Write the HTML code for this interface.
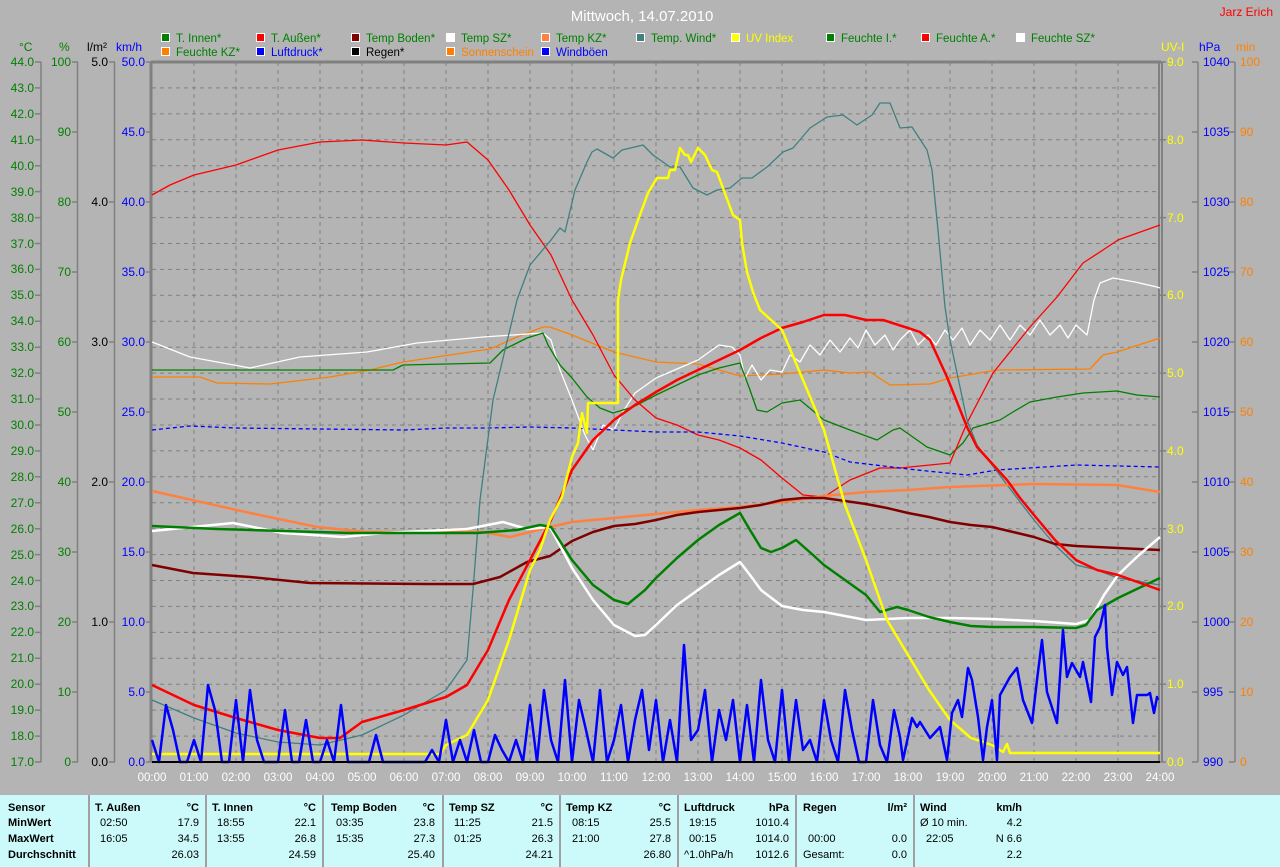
<!DOCTYPE html>
<html><head><meta charset="utf-8"><style>
body{margin:0;width:1280px;height:867px;background:#b4b4b4;overflow:hidden;font-family:"Liberation Sans",sans-serif;}
svg{position:absolute;left:0;top:0}
#tbl{position:absolute;left:0;top:795px;width:1280px;height:72px;background:#ccfafa;font-size:11px;color:#000}
#tbl div{position:absolute;white-space:nowrap}
.sep{width:2px;height:72px;top:0;background:#a0a0a0}
.b{font-weight:bold}
.r{text-align:right}
</style></head><body>
<svg width="1280" height="795" xmlns="http://www.w3.org/2000/svg" font-family="Liberation Sans, sans-serif" font-size="12">
<rect x="0" y="0" width="1280" height="795" fill="#b4b4b4"/>
<!-- grid -->
<g stroke="#808080" stroke-width="1" stroke-dasharray="4,4" fill="none">
<path d="M152 87.9H1160M152 113.9H1160M152 139.8H1160M152 165.7H1160M152 191.6H1160M152 217.6H1160M152 243.5H1160M152 269.4H1160M152 295.3H1160M152 321.3H1160M152 347.2H1160M152 373.1H1160M152 399H1160M152 425H1160M152 450.9H1160M152 476.8H1160M152 502.7H1160M152 528.7H1160M152 554.6H1160M152 580.5H1160M152 606.4H1160M152 632.4H1160M152 658.3H1160M152 684.2H1160M152 710.1H1160M152 736.1H1160"/>
<path d="M194 62V762M236 62V762M278 62V762M320 62V762M362 62V762M404 62V762M446 62V762M488 62V762M530 62V762M572 62V762M614 62V762M656 62V762M698 62V762M740 62V762M782 62V762M824 62V762M866 62V762M908 62V762M950 62V762M992 62V762M1034 62V762M1076 62V762M1118 62V762"/>
</g>
<!-- borders -->
<path d="M151 62H1161" stroke="#808080" stroke-width="3"/>
<path d="M151 62V762" stroke="#808080" stroke-width="3"/>
<path d="M1159 62V762M1162 62V762" stroke="#808080" stroke-width="2"/>
<!-- axes -->
<g stroke="#808080" stroke-width="1.5" fill="none">
<path d="M41 62V762M77.5 62V762M114.5 62V762M1198 62V762M1235 62V762"/>
<path d="M35 62H41M35 87.9H41M35 113.9H41M35 139.8H41M35 165.7H41M35 191.6H41M35 217.6H41M35 243.5H41M35 269.4H41M35 295.3H41M35 321.3H41M35 347.2H41M35 373.1H41M35 399H41M35 425H41M35 450.9H41M35 476.8H41M35 502.7H41M35 528.7H41M35 554.6H41M35 580.5H41M35 606.4H41M35 632.4H41M35 658.3H41M35 684.2H41M35 710.1H41M35 736.1H41M35 762H41"/>
<path d="M72 62H78M72 132H78M72 202H78M72 272H78M72 342H78M72 412H78M72 482H78M72 552H78M72 622H78M72 692H78M72 762H78"/>
<path d="M109 62H115M109 202H115M109 342H115M109 482H115M109 622H115M109 762H115"/>
<path d="M146 62H152M146 132H152M146 202H152M146 272H152M146 342H152M146 412H152M146 482H152M146 552H152M146 622H152M146 692H152M146 762H152"/>
<path d="M1160 62H1166M1160 139.8H1166M1160 217.6H1166M1160 295.3H1166M1160 373.1H1166M1160 450.9H1166M1160 528.7H1166M1160 606.4H1166M1160 684.2H1166M1160 762H1166"/>
<path d="M1192 62H1198M1192 132H1198M1192 202H1198M1192 272H1198M1192 342H1198M1192 412H1198M1192 482H1198M1192 552H1198M1192 622H1198M1192 692H1198M1192 762H1198"/>
<path d="M1229 62H1235M1229 132H1235M1229 202H1235M1229 272H1235M1229 342H1235M1229 412H1235M1229 482H1235M1229 552H1235M1229 622H1235M1229 692H1235M1229 762H1235"/>
</g>
<!-- axis labels -->
<g fill="#008000" text-anchor="end">
<text x="34" y="66">44.0</text><text x="34" y="92">43.0</text><text x="34" y="118">42.0</text><text x="34" y="144">41.0</text><text x="34" y="170">40.0</text><text x="34" y="196">39.0</text><text x="34" y="222">38.0</text><text x="34" y="248">37.0</text><text x="34" y="273">36.0</text><text x="34" y="299">35.0</text><text x="34" y="325">34.0</text><text x="34" y="351">33.0</text><text x="34" y="377">32.0</text><text x="34" y="403">31.0</text><text x="34" y="429">30.0</text><text x="34" y="455">29.0</text><text x="34" y="481">28.0</text><text x="34" y="507">27.0</text><text x="34" y="533">26.0</text><text x="34" y="559">25.0</text><text x="34" y="585">24.0</text><text x="34" y="610">23.0</text><text x="34" y="636">22.0</text><text x="34" y="662">21.0</text><text x="34" y="688">20.0</text><text x="34" y="714">19.0</text><text x="34" y="740">18.0</text><text x="34" y="766">17.0</text>
<text x="71" y="66">100</text><text x="71" y="136">90</text><text x="71" y="206">80</text><text x="71" y="276">70</text><text x="71" y="346">60</text><text x="71" y="416">50</text><text x="71" y="486">40</text><text x="71" y="556">30</text><text x="71" y="626">20</text><text x="71" y="696">10</text><text x="71" y="766">0</text>
</g>
<g fill="#000" text-anchor="end">
<text x="108" y="66">5.0</text><text x="108" y="206">4.0</text><text x="108" y="346">3.0</text><text x="108" y="486">2.0</text><text x="108" y="626">1.0</text><text x="108" y="766">0.0</text>
</g>
<g fill="#0000ff" text-anchor="end">
<text x="145" y="66">50.0</text><text x="145" y="136">45.0</text><text x="145" y="206">40.0</text><text x="145" y="276">35.0</text><text x="145" y="346">30.0</text><text x="145" y="416">25.0</text><text x="145" y="486">20.0</text><text x="145" y="556">15.0</text><text x="145" y="626">10.0</text><text x="145" y="696">5.0</text><text x="145" y="766">0.0</text>
</g>
<g fill="#ffff00">
<text x="1167" y="66">9.0</text><text x="1167" y="144">8.0</text><text x="1167" y="222">7.0</text><text x="1167" y="299">6.0</text><text x="1167" y="377">5.0</text><text x="1167" y="455">4.0</text><text x="1167" y="533">3.0</text><text x="1167" y="610">2.0</text><text x="1167" y="688">1.0</text><text x="1167" y="766">0.0</text>
</g>
<g fill="#0000ff">
<text x="1203" y="66">1040</text><text x="1203" y="136">1035</text><text x="1203" y="206">1030</text><text x="1203" y="276">1025</text><text x="1203" y="346">1020</text><text x="1203" y="416">1015</text><text x="1203" y="486">1010</text><text x="1203" y="556">1005</text><text x="1203" y="626">1000</text><text x="1203" y="696">995</text><text x="1203" y="766">990</text>
</g>
<g fill="#ff8000">
<text x="1240" y="66">100</text><text x="1240" y="136">90</text><text x="1240" y="206">80</text><text x="1240" y="276">70</text><text x="1240" y="346">60</text><text x="1240" y="416">50</text><text x="1240" y="486">40</text><text x="1240" y="556">30</text><text x="1240" y="626">20</text><text x="1240" y="696">10</text><text x="1240" y="766">0</text>
</g>
<text x="19" y="51" fill="#008000">°C</text>
<text x="59" y="51" fill="#008000">%</text>
<text x="87" y="51" fill="#000">l/m²</text>
<text x="116" y="51" fill="#0000ff">km/h</text>
<text x="1161" y="51" fill="#ffff00">UV-I</text>
<text x="1199" y="51" fill="#0000ff">hPa</text>
<text x="1236" y="51" fill="#ff8000">min</text>
<!-- time labels -->
<g fill="#fff" text-anchor="middle" font-size="11.5">
<text x="152" y="781">00:00</text><text x="194" y="781">01:00</text><text x="236" y="781">02:00</text><text x="278" y="781">03:00</text><text x="320" y="781">04:00</text><text x="362" y="781">05:00</text><text x="404" y="781">06:00</text><text x="446" y="781">07:00</text><text x="488" y="781">08:00</text><text x="530" y="781">09:00</text><text x="572" y="781">10:00</text><text x="614" y="781">11:00</text><text x="656" y="781">12:00</text><text x="698" y="781">13:00</text><text x="740" y="781">14:00</text><text x="782" y="781">15:00</text><text x="824" y="781">16:00</text><text x="866" y="781">17:00</text><text x="908" y="781">18:00</text><text x="950" y="781">19:00</text><text x="992" y="781">20:00</text><text x="1034" y="781">21:00</text><text x="1076" y="781">22:00</text><text x="1118" y="781">23:00</text><text x="1160" y="781">24:00</text>
</g>
<!-- title -->
<text x="642" y="21" fill="#fff" font-size="15" text-anchor="middle">Mittwoch, 14.07.2010</text>
<text x="1273" y="16" fill="#ff0000" text-anchor="end">Jarz Erich</text>
<!-- legend -->
<g font-size="11.5" stroke="#fff" stroke-width="1">
<rect x="161.5" y="33.5" width="8" height="8" fill="#008000"/><rect x="256.5" y="33.5" width="8" height="8" fill="#ff0000"/><rect x="351.5" y="33.5" width="8" height="8" fill="#800000"/><rect x="446.5" y="33.5" width="8" height="8" fill="#fff"/><rect x="541.5" y="33.5" width="8" height="8" fill="#ff8040"/><rect x="636.5" y="33.5" width="8" height="8" fill="#408080"/><rect x="731.5" y="33.5" width="8" height="8" fill="#ffff00"/><rect x="826.5" y="33.5" width="8" height="8" fill="#008000"/><rect x="921.5" y="33.5" width="8" height="8" fill="#ff0000"/><rect x="1016.5" y="33.5" width="8" height="8" fill="#fff"/>
<rect x="161.5" y="47.5" width="8" height="8" fill="#ff8000"/><rect x="256.5" y="47.5" width="8" height="8" fill="#0000ff"/><rect x="351.5" y="47.5" width="8" height="8" fill="#000"/><rect x="446.5" y="47.5" width="8" height="8" fill="#ff8000"/><rect x="541.5" y="47.5" width="8" height="8" fill="#0000ff"/>
</g>
<g font-size="11.5" stroke="none">
<text x="176" y="42" fill="#008000">T. Innen*</text><text x="271" y="42" fill="#008000">T. Außen*</text><text x="366" y="42" fill="#008000">Temp Boden*</text><text x="461" y="42" fill="#008000">Temp SZ*</text><text x="556" y="42" fill="#008000">Temp KZ*</text><text x="651" y="42" fill="#008000">Temp. Wind*</text><text x="746" y="42" fill="#ffff00">UV Index</text><text x="841" y="42" fill="#008000">Feuchte I.*</text><text x="936" y="42" fill="#008000">Feuchte A.*</text><text x="1031" y="42" fill="#008000">Feuchte SZ*</text>
<text x="176" y="56" fill="#008000">Feuchte KZ*</text><text x="271" y="56" fill="#0000ff">Luftdruck*</text><text x="366" y="56" fill="#000">Regen*</text><text x="461" y="56" fill="#ff8000">Sonnenschein</text><text x="556" y="56" fill="#0000ff">Windböen</text>
</g>
<!-- data -->
<g fill="none" stroke-linejoin="round">
<!-- Feuchte KZ -->
<polyline stroke="#ff8000" stroke-width="1.3" points="152,377 200,377 217,383 270,384 330,377 370,370 403,362 490,349 517,337 543,327 550,327 572,335 614,352 656,362 698,364 740,376 782,374 824,370 850,373 870,372 890,385 930,384 950,378 997,370 1090,369 1103,355 1117,352 1160,338"/>
<!-- Feuchte SZ -->
<polyline stroke="#fff" stroke-width="1.3" points="152,342 190,357 250,368 300,357 367,352 417,343 483,337 543,333 551,340 560,370 572,400 585,435 593,450 603,425 614,430 624,410 635,393 656,378 698,360 719,345 732,347 740,355 745,378 752,365 761,380 770,370 782,372 790,355 800,362 810,345 820,355 830,340 840,352 850,338 858,348 866,330 875,345 885,335 893,350 900,340 910,330 918,345 928,335 936,345 945,330 953,340 962,328 970,345 980,330 990,340 1000,325 1010,340 1020,325 1030,335 1040,320 1050,335 1060,325 1068,338 1076,325 1087,335 1094,300 1100,283 1113,278 1135,282 1157,287 1160,288"/>
<!-- Feuchte I -->
<polyline stroke="#008000" stroke-width="1.3" points="152,370 393,370 403,365 490,363 503,350 527,338 543,333 548,345 560,365 572,378 587,397 600,408 613,413 633,407 656,395 677,385 698,375 719,368 740,363 750,390 757,410 767,412 782,403 800,400 824,420 850,430 877,440 893,430 900,428 927,447 950,455 963,443 973,428 1000,420 1013,412 1030,402 1057,397 1083,393 1117,391 1137,395 1160,397"/>
<!-- Feuchte A -->
<polyline stroke="#ff0000" stroke-width="1.3" points="152,195 170,185 194,175 236,165 278,150 320,142 362,140 404,143 446,145 467,142 488,160 509,190 530,225 551,255 572,300 593,335 614,375 635,400 656,418 677,425 698,435 719,440 740,448 761,460 782,478 803,495 824,497 850,480 880,468 900,468 930,465 950,463 967,423 993,373 1030,327 1057,297 1083,263 1103,250 1118,240 1160,225"/>
<!-- Luftdruck -->
<polyline stroke="#0000ff" stroke-width="1.3" stroke-dasharray="4,3" points="152,430 190,426 236,428 320,429 404,430 446,428 488,428 530,427 572,428 614,430 656,432 698,432 740,436 782,443 824,452 850,462 917,470 967,475 997,470 1077,465 1160,467"/>
<!-- Temp Wind -->
<polyline stroke="#408080" stroke-width="1.3" points="152,700 194,718 236,733 278,742 320,745 362,735 404,715 446,690 467,660 473,590 480,500 493,400 517,300 530,265 551,240 560,228 565,232 575,190 587,162 592,152 597,149 613,158 622,150 643,145 653,155 670,167 680,167 693,188 707,195 717,190 730,188 742,178 752,178 767,167 783,152 793,148 810,128 827,117 843,115 857,125 872,115 880,103 890,103 900,128 912,127 927,150 932,170 938,230 945,307 950,340 967,420 977,445 1017,498 1034,520 1055,545 1076,565 1097,570 1118,578 1160,585"/>
<!-- Temp KZ -->
<polyline stroke="#ff8040" stroke-width="2.5" points="152,491 250,513 317,527 367,532 483,532 510,537 550,527 572,522 614,518 656,514 698,510 740,507 782,502 824,496 866,492 908,490 950,487 1033,484 1117,485 1160,492"/>
<!-- Temp Boden -->
<polyline stroke="#800000" stroke-width="2.5" points="152,565 193,573 250,577 310,583 427,584 473,584 500,577 527,562 550,556 572,541 593,532 614,526 635,524 656,520 677,515 698,512 740,508 761,505 782,500 803,498 824,498 866,504 887,508 908,513 929,517 950,522 971,525 992,527 1034,537 1055,544 1076,546 1118,548 1160,550"/>
<!-- Temp SZ -->
<polyline stroke="#fff" stroke-width="2.5" points="152,531 233,523 283,533 343,537 383,533 467,529 503,522 527,529 550,527 572,568 593,600 614,625 635,636 645,635 656,625 677,605 698,590 719,575 740,562 750,575 761,590 782,606 803,610 824,612 866,620 908,618 950,618 992,619 1034,621 1076,624 1090,620 1104,595 1118,575 1139,555 1160,537"/>
<!-- T Innen -->
<polyline stroke="#008000" stroke-width="2.5" points="152,526 217,529 350,533 477,533 517,530 540,525 551,527 572,560 593,585 614,600 628,604 645,590 656,578 677,558 698,540 719,525 740,513 750,530 761,548 771,552 782,548 796,540 813,555 824,565 845,580 866,595 880,612 897,607 908,610 929,617 950,622 971,626 992,627 1034,627 1076,628 1086,625 1097,610 1118,598 1139,588 1160,578"/>
<!-- T Außen -->
<polyline stroke="#ff0000" stroke-width="2.5" points="152,685 194,705 236,718 278,730 320,738 340,738 362,722 404,710 446,697 467,685 488,650 509,600 530,560 551,520 572,470 593,440 614,420 635,405 656,392 677,380 698,370 719,360 740,350 761,338 782,328 803,322 824,315 845,315 866,320 883,320 908,328 920,332 930,340 947,377 967,427 977,447 1007,480 1020,498 1034,515 1055,540 1076,560 1097,570 1118,575 1160,590"/>
<!-- UV -->
<polyline stroke="#ffff00" stroke-width="2.5" points="152,754 440,754 446,745 467,735 488,700 509,640 530,570 540,550 550,520 562,497 572,457 578,443 582,413 587,433 588,403 618,403 618,300 621,280 630,243 637,223 648,193 657,178 668,178 670,170 675,170 680,148 685,155 688,155 691,162 698,148 705,155 712,170 717,172 733,215 740,220 742,243 747,272 753,292 760,310 782,330 803,380 824,430 845,505 866,560 887,620 908,655 929,690 950,720 971,738 992,745 1003,752 1007,744 1010,753 1160,753"/>
<!-- Windböen -->
<polyline stroke="#0000ff" stroke-width="2.5" points="152,740 159,762 166,705 173,730 180,762 187,762 194,740 201,762 208,685 215,710 222,762 229,762 236,700 243,762 250,690 257,740 264,762 271,762 278,762 285,710 292,762 299,762 306,720 313,762 320,762 327,740 334,762 341,705 348,762 355,762 362,762 369,762 376,735 383,762 390,762 397,762 404,762 411,762 418,762 425,762 432,750 439,762 446,720 453,762 460,740 467,762 474,730 481,762 488,762 495,735 502,750 509,762 516,740 523,762 530,705 537,762 544,690 551,740 558,762 565,680 572,762 579,700 586,730 593,762 600,690 607,762 614,740 621,705 628,762 635,720 642,690 649,750 656,700 663,762 670,720 677,762 684,645 691,740 698,730 705,690 712,762 719,710 726,740 733,700 740,762 747,705 754,762 761,680 768,740 775,762 782,690 789,762 796,700 803,750 810,740 817,762 824,700 831,740 838,762 845,690 852,730 859,762 866,762 873,700 880,745 887,762 894,710 900,737 903,760 912,718 917,727 920,722 930,738 940,727 947,760 952,713 958,700 962,717 968,668 972,680 978,717 983,760 987,727 992,700 997,760 1000,695 1010,677 1017,668 1023,700 1032,723 1037,680 1042,640 1047,692 1057,723 1063,630 1067,677 1072,663 1080,677 1083,662 1091,702 1095,637 1100,627 1105,605 1107,647 1112,695 1117,662 1123,675 1127,667 1133,723 1137,695 1147,695 1150,693 1154,713 1157,697 1158,700"/>
</g>
<path d="M152 762H1160" stroke="#000" stroke-width="2"/>
<rect x="0" y="790" width="1280" height="5" fill="#b4b4b4"/>
</svg>
<div id="tbl">
<div class="sep" style="left:88px"></div><div class="sep" style="left:205px"></div><div class="sep" style="left:322px"></div><div class="sep" style="left:442px"></div><div class="sep" style="left:559px"></div><div class="sep" style="left:677px"></div><div class="sep" style="left:795px"></div><div class="sep" style="left:913px"></div>
<div class="b" style="left:8px;top:7px">Sensor</div><div class="b" style="left:8px;top:22px">MinWert</div><div class="b" style="left:8px;top:38px">MaxWert</div><div class="b" style="left:8px;top:54px">Durchschnitt</div>
<div class="b" style="left:95px;top:7px">T. Außen</div><div class="b r" style="right:1081px;top:7px">°C</div>
<div style="left:100px;top:22px">02:50</div><div class="r" style="right:1081px;top:22px">17.9</div>
<div style="left:100px;top:38px">16:05</div><div class="r" style="right:1081px;top:38px">34.5</div>
<div class="r" style="right:1081px;top:54px">26.03</div>
<div class="b" style="left:212px;top:7px">T. Innen</div><div class="b r" style="right:964px;top:7px">°C</div>
<div style="left:217px;top:22px">18:55</div><div class="r" style="right:964px;top:22px">22.1</div>
<div style="left:217px;top:38px">13:55</div><div class="r" style="right:964px;top:38px">26.8</div>
<div class="r" style="right:964px;top:54px">24.59</div>
<div class="b" style="left:331px;top:7px">Temp Boden</div><div class="b r" style="right:845px;top:7px">°C</div>
<div style="left:336px;top:22px">03:35</div><div class="r" style="right:845px;top:22px">23.8</div>
<div style="left:336px;top:38px">15:35</div><div class="r" style="right:845px;top:38px">27.3</div>
<div class="r" style="right:845px;top:54px">25.40</div>
<div class="b" style="left:449px;top:7px">Temp SZ</div><div class="b r" style="right:727px;top:7px">°C</div>
<div style="left:454px;top:22px">11:25</div><div class="r" style="right:727px;top:22px">21.5</div>
<div style="left:454px;top:38px">01:25</div><div class="r" style="right:727px;top:38px">26.3</div>
<div class="r" style="right:727px;top:54px">24.21</div>
<div class="b" style="left:566px;top:7px">Temp KZ</div><div class="b r" style="right:609px;top:7px">°C</div>
<div style="left:572px;top:22px">08:15</div><div class="r" style="right:609px;top:22px">25.5</div>
<div style="left:572px;top:38px">21:00</div><div class="r" style="right:609px;top:38px">27.8</div>
<div class="r" style="right:609px;top:54px">26.80</div>
<div class="b" style="left:684px;top:7px">Luftdruck</div><div class="b r" style="right:491px;top:7px">hPa</div>
<div style="left:689px;top:22px">19:15</div><div class="r" style="right:491px;top:22px">1010.4</div>
<div style="left:689px;top:38px">00:15</div><div class="r" style="right:491px;top:38px">1014.0</div>
<div style="left:684px;top:54px">^1.0hPa/h</div><div class="r" style="right:491px;top:54px">1012.6</div>
<div class="b" style="left:803px;top:7px">Regen</div><div class="b r" style="right:373px;top:7px">l/m²</div>
<div style="left:808px;top:38px">00:00</div><div class="r" style="right:373px;top:38px">0.0</div>
<div style="left:803px;top:54px">Gesamt:</div><div class="r" style="right:373px;top:54px">0.0</div>
<div class="b" style="left:920px;top:7px">Wind</div><div class="b r" style="right:258px;top:7px">km/h</div>
<div style="left:920px;top:22px">Ø 10 min.</div><div class="r" style="right:258px;top:22px">4.2</div>
<div style="left:926px;top:38px">22:05</div><div class="r" style="right:258px;top:38px">N 6.6</div>
<div class="r" style="right:258px;top:54px">2.2</div>
</div>
</body></html>
